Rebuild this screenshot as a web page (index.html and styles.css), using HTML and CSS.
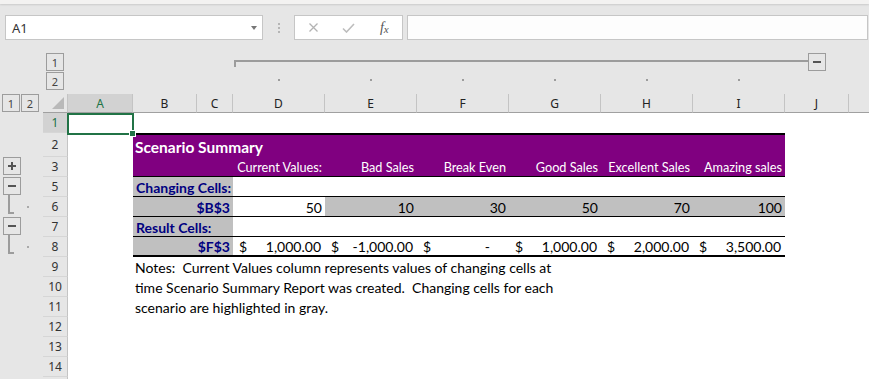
FILE: index.html
```html
<!DOCTYPE html>
<html lang="en">
<head>
    <meta charset="UTF-8">
    <title>Scenario Summary</title>
    <link rel="stylesheet" href="styles.css">
</head>
<body>
    <div class="ribbon-edge"></div>

    <div class="formula-bar">
        <div class="name-box"><span>A1</span><span class="drop"></span></div>
        <div class="grip"></div>
        <div class="fn-box">
            <span class="fn-btn">
                <svg width="11" height="9" viewBox="0 0 11 9"><path d="M1.5 0.5 L9.5 8.5 M9.5 0.5 L1.5 8.5" stroke="#b3b3b3" stroke-width="1.3" fill="none"/></svg>
            </span>
            <span class="fn-btn">
                <svg width="13" height="10" viewBox="0 0 13 10"><path d="M1 5.5 L4.5 9 L12 1" stroke="#bdbdbd" stroke-width="1.6" fill="none"/></svg>
            </span>
            <span class="fn-btn fx"><i>f</i><i class="fx-x">x</i></span>
        </div>
        <div class="formula-input"></div>
    </div>

    <div class="outline-band">
        <div class="lvl-btn row-lvl-1">1</div>
        <div class="lvl-btn row-lvl-2">2</div>
        <div class="col-group">
            <div class="group-line"></div>
            <div class="lvl-btn"><span class="minus"></span></div>
        </div>
        <span class="dot cD"></span>
        <span class="dot cE"></span>
        <span class="dot cF"></span>
        <span class="dot cG"></span>
        <span class="dot cH"></span>
        <span class="dot cI"></span>
    </div>

    <div class="sheet">
        <div class="row head-row">
            <div class="ol col-lvls">
                <div class="lvl-btn">1</div>
                <div class="lvl-btn">2</div>
            </div>
            <div class="corner"><span class="tri"></span></div>
            <div class="ch active">A</div>
            <div class="ch">B</div>
            <div class="ch">C</div>
            <div class="ch">D</div>
            <div class="ch">E</div>
            <div class="ch">F</div>
            <div class="ch">G</div>
            <div class="ch">H</div>
            <div class="ch">I</div>
            <div class="ch">J</div>
            <div class="ch last"></div>
        </div>

        <div class="row">
            <div class="ol"></div>
            <div class="rh active">1</div>
            <div class="cell a1"><span class="sel"></span><span class="handle"></span></div>
        </div>

        <div class="row tall">
            <div class="ol"></div>
            <div class="rh">2</div>
            <div class="cell"></div>
            <div class="cell purple title span-8">Scenario Summary</div>
        </div>

        <div class="row">
            <div class="ol"><div class="lvl-btn small"><span class="plus"></span></div></div>
            <div class="rh">3</div>
            <div class="cell"></div>
            <div class="cell purple bb span-2"></div>
            <div class="cell purple bb r col-title">Current Values:</div>
            <div class="cell purple bb r col-title">Bad Sales</div>
            <div class="cell purple bb r col-title">Break Even</div>
            <div class="cell purple bb r col-title">Good Sales</div>
            <div class="cell purple bb r col-title">Excellent Sales</div>
            <div class="cell purple bb r col-title">Amazing sales</div>
        </div>

        <div class="row">
            <div class="ol"><div class="lvl-btn small"><span class="minus"></span></div></div>
            <div class="rh">5</div>
            <div class="cell"></div>
            <div class="cell grey lbl bb span-2">Changing Cells:</div>
            <div class="cell bb"></div>
            <div class="cell bb"></div>
            <div class="cell bb"></div>
            <div class="cell bb"></div>
            <div class="cell bb"></div>
            <div class="cell bb"></div>
        </div>

        <div class="row">
            <div class="ol"><span class="bracket"></span><span class="ol-dot"></span></div>
            <div class="rh">6</div>
            <div class="cell"></div>
            <div class="cell grey lbl bb r span-2">$B$3</div>
            <div class="cell bb r">50</div>
            <div class="cell grey bb r">10</div>
            <div class="cell grey bb r">30</div>
            <div class="cell grey bb r">50</div>
            <div class="cell grey bb r">70</div>
            <div class="cell grey bb r">100</div>
        </div>

        <div class="row">
            <div class="ol"><div class="lvl-btn small"><span class="minus"></span></div></div>
            <div class="rh">7</div>
            <div class="cell"></div>
            <div class="cell grey lbl bb span-2">Result Cells:</div>
            <div class="cell bb"></div>
            <div class="cell bb"></div>
            <div class="cell bb"></div>
            <div class="cell bb"></div>
            <div class="cell bb"></div>
            <div class="cell bb"></div>
        </div>

        <div class="row">
            <div class="ol"><span class="bracket"></span><span class="ol-dot"></span></div>
            <div class="rh">8</div>
            <div class="cell"></div>
            <div class="cell grey lbl bb2 r span-2">$F$3</div>
            <div class="cell bb2 acct"><span>$</span><span>1,000.00</span></div>
            <div class="cell bb2 acct"><span>$</span><span>-1,000.00</span></div>
            <div class="cell bb2 acct zero"><span>$</span><span>-</span></div>
            <div class="cell bb2 acct"><span>$</span><span>1,000.00</span></div>
            <div class="cell bb2 acct"><span>$</span><span>2,000.00</span></div>
            <div class="cell bb2 acct"><span>$</span><span>3,500.00</span></div>
        </div>

        <div class="row">
            <div class="ol"></div>
            <div class="rh">9</div>
            <div class="cell"></div>
            <div class="cell note">Notes:  Current Values column represents values of changing cells at</div>
        </div>

        <div class="row">
            <div class="ol"></div>
            <div class="rh">10</div>
            <div class="cell"></div>
            <div class="cell note">time Scenario Summary Report was created.  Changing cells for each</div>
        </div>

        <div class="row">
            <div class="ol"></div>
            <div class="rh">11</div>
            <div class="cell"></div>
            <div class="cell note">scenario are highlighted in gray.</div>
        </div>

        <div class="row">
            <div class="ol"></div>
            <div class="rh">12</div>
        </div>

        <div class="row">
            <div class="ol"></div>
            <div class="rh">13</div>
        </div>

        <div class="row">
            <div class="ol"></div>
            <div class="rh">14</div>
        </div>

        <div class="row">
            <div class="ol"></div>
            <div class="rh"></div>
        </div>
    </div>
</body>
</html>
```

FILE: styles.css
```css
:root {
    --cols: 43px 25px 65px 64px 36px repeat(6, 92px) 64px 1fr;
    --panel: #e6e6e6;
    --outline: #9c9c9c;
    --green: #217346;
}

body {
    margin: 0;
    width: 869px;
    height: 379px;
    overflow: hidden;
    background-color: #fff;
    font-family: "Lato", "Liberation Sans", sans-serif;
}

.ribbon-edge {
    position: relative;
    height: 4px;
    background-color: #f3f2f1;
    box-shadow: 0 1px 2px rgba(0, 0, 0, 0.12);
}

/* formula bar */

.formula-bar {
    display: flex;
    align-items: flex-start;
    height: 44px;
    box-sizing: border-box;
    padding: 11px 1px 0 5px;
    background-color: var(--panel);
}

.name-box {
    width: 258px;
    height: 25px;
    box-sizing: border-box;
    display: flex;
    align-items: center;
    justify-content: space-between;
    padding: 0 5px 0 6px;
    border: 1px solid #c6c6c6;
    background-color: #fff;
    font-family: "Noto Sans", sans-serif;
    font-size: 13px;
    color: #333;
}

.drop {
    width: 0;
    height: 0;
    border-left: 3.5px solid transparent;
    border-right: 3.5px solid transparent;
    border-top: 4px solid #777;
}

.grip {
    width: 2px;
    height: 2px;
    margin: 8px 0 0 15px;
    background-color: #b5b5b5;
    box-shadow: 0 4px 0 #b5b5b5, 0 8px 0 #b5b5b5;
}

.fn-box {
    width: 109px;
    height: 25px;
    box-sizing: border-box;
    display: flex;
    align-items: center;
    margin-left: 14px;
    padding-left: 1px;
    border: 1px solid #c6c6c6;
    background-color: #fff;
}

.fn-btn {
    width: 36px;
    display: flex;
    justify-content: center;
    align-items: center;
}

.fx {
    font-family: "Liberation Serif", serif;
    font-size: 14px;
    color: #555;
}

.fx-x {
    font-size: 11px;
    margin-top: 3px;
}

.formula-input {
    flex: 1;
    height: 25px;
    box-sizing: border-box;
    margin-left: 4px;
    border: 1px solid #c6c6c6;
    background-color: #fdfdfd;
}

/* outline controls */

.outline-band {
    display: grid;
    grid-template-columns: var(--cols);
    grid-template-rows: 5px 19px 19px 3px;
    height: 46px;
    background-color: var(--panel);
}

.lvl-btn {
    width: 18px;
    height: 18px;
    box-sizing: border-box;
    display: flex;
    justify-content: center;
    align-items: center;
    border: 1px solid var(--outline);
    font-family: "Noto Sans", sans-serif;
    font-size: 11px;
    color: #444;
}

.row-lvl-1 {
    grid-column: 2;
    grid-row: 2;
    margin-left: 3px;
}

.row-lvl-2 {
    grid-column: 2;
    grid-row: 3;
    margin-left: 3px;
}

.col-group {
    grid-column: 6 / 13;
    grid-row: 2;
    display: flex;
    margin-right: 23px;
}

.group-line {
    flex: 1;
    height: 5px;
    margin: 7px 0 0 1px;
    border-top: 2px solid var(--outline);
    border-left: 2px solid var(--outline);
}

.minus {
    width: 8px;
    height: 2px;
    background-color: #555;
}

.plus {
    position: relative;
    width: 8px;
    height: 2px;
    background-color: #555;
}

.plus::after {
    content: "";
    position: absolute;
    left: 3px;
    top: -3px;
    width: 2px;
    height: 8px;
    background-color: #555;
}

.dot {
    grid-row: 3;
    justify-self: center;
    width: 2px;
    height: 2px;
    margin-top: 7px;
    background-color: var(--outline);
}

.cD { grid-column: 6; }
.cE { grid-column: 7; }
.cF { grid-column: 8; }
.cG { grid-column: 9; }
.cH { grid-column: 10; }
.cI { grid-column: 11; }

/* sheet */

.row {
    display: grid;
    grid-template-columns: var(--cols);
    height: 20px;
}

.row.tall {
    height: 24px;
}

.head-row {
    height: 19px;
    background-color: var(--panel);
}

.ol {
    display: flex;
    align-items: flex-start;
    padding-left: 3px;
    background-color: var(--panel);
}

.col-lvls {
    gap: 1px;
    padding-left: 2px;
}

.corner {
    display: flex;
    justify-content: flex-end;
    align-items: flex-end;
    padding: 0 3px 3px 0;
    border-bottom: 1px solid #a0a0a0;
    border-right: 1px solid #c4c4c4;
}

.tri {
    width: 0;
    height: 0;
    border-left: 12px solid transparent;
    border-bottom: 12px solid #b9b9b9;
}

.ch {
    display: flex;
    justify-content: center;
    align-items: center;
    border-right: 1px solid #c4c4c4;
    border-bottom: 1px solid #a0a0a0;
    font-family: "Noto Sans", sans-serif;
    font-size: 12px;
    color: #222;
}

.ch.active {
    background-color: #d2d2d2;
    color: var(--green);
}

.ch.last {
    border-right: none;
}

.rh {
    display: flex;
    justify-content: center;
    align-items: center;
    border-right: 1px solid #c4c4c4;
    border-bottom: 1px solid #d6d6d6;
    background-color: var(--panel);
    font-family: "Noto Sans", sans-serif;
    font-size: 12px;
    color: #333;
}

.rh.active {
    background-color: #d2d2d2;
    color: var(--green);
}

.cell {
    display: flex;
    align-items: center;
    box-sizing: border-box;
    padding: 1px 3px 0 3px;
    font-size: 14px;
    white-space: nowrap;
}

.a1 {
    position: relative;
}

.sel {
    position: absolute;
    left: -1px;
    top: 0;
    right: -1px;
    bottom: -2px;
    border: 2px solid var(--green);
}

.handle {
    position: absolute;
    right: -3px;
    bottom: -4px;
    width: 5px;
    height: 5px;
    border: 1px solid #fff;
    background-color: var(--green);
}

.span-2 {
    grid-column: span 2;
}

.span-8 {
    grid-column: span 8;
}

.purple {
    background-color: #800080;
    color: #fff;
}

.title {
    border-top: 2px solid #000;
    padding-left: 2px;
    font-size: 15.5px;
    font-weight: bold;
}

.col-title {
    font-size: 12.7px;
}

.grey {
    background-color: #c0c0c0;
}

.lbl {
    color: #000080;
    font-weight: bold;
}

.r {
    justify-content: flex-end;
}

.bb {
    border-bottom: 1px solid #000;
}

.bb2 {
    border-bottom: 2px solid #000;
}

.acct {
    justify-content: space-between;
    padding: 0 4px 0 6px;
}

.acct.zero {
    padding-right: 19px;
}

.bracket {
    width: 4px;
    height: 17px;
    margin: -2px 0 0 5px;
    border-left: 2px solid var(--outline);
    border-bottom: 2px solid var(--outline);
}

.ol-dot {
    width: 2px;
    height: 2px;
    margin: 9px 0 0 13px;
    background-color: #aaa;
}

.note {
    grid-column: 4 / span 9;
    padding-left: 2px;
    white-space: pre;
    color: #000;
}
```
